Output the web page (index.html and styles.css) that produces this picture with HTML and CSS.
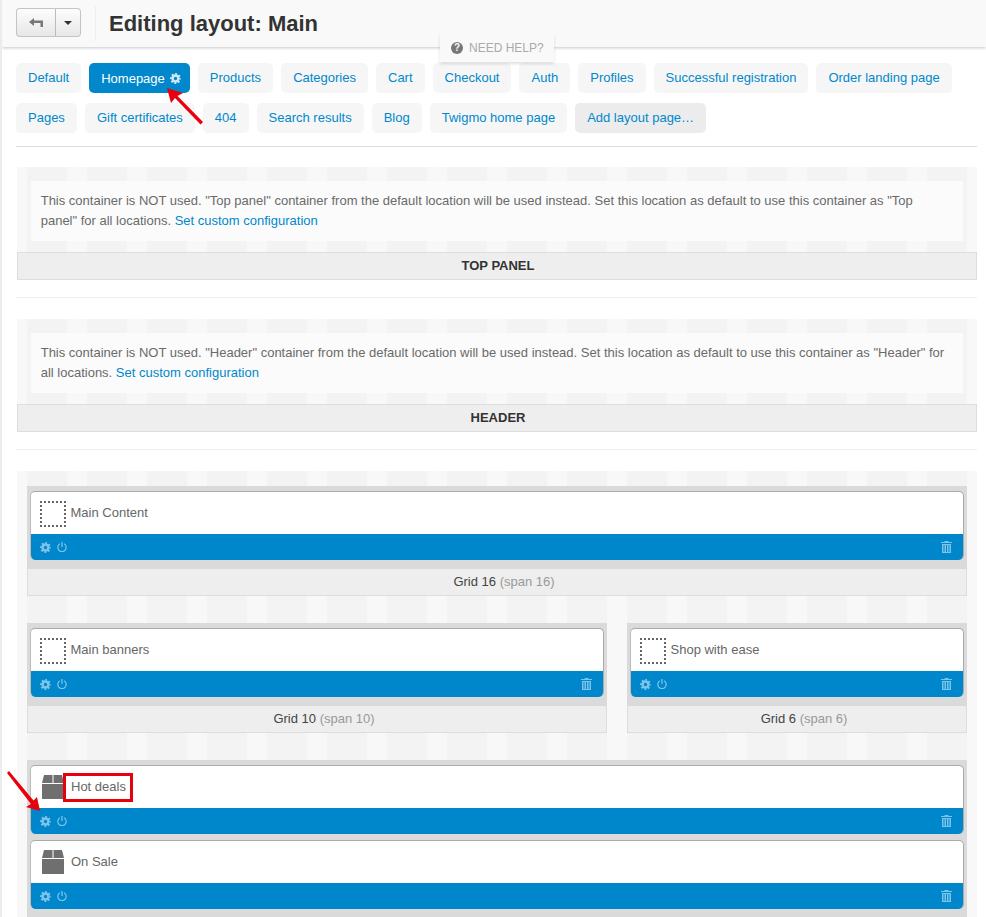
FILE: index.html
```html
<!DOCTYPE html>
<html lang="en">
<head>
<meta charset="utf-8">
<title>Editing layout: Main</title>
<link rel="stylesheet" href="styles.css">
</head>
<body>
<svg class="defs" width="0" height="0" aria-hidden="true">
  <symbol id="gear" viewBox="0 0 12 12">
    <circle cx="6" cy="6" r="3.2" fill="none" stroke="currentColor" stroke-width="2.8"/>
    <circle cx="6" cy="6" r="5" fill="none" stroke="currentColor" stroke-width="2" stroke-dasharray="2 1.93" stroke-dashoffset="1"/>
  </symbol>
  <symbol id="power" viewBox="0 0 12 12">
    <path d="M3.400 2.200a5 5 0 1 0 5.200 0" fill="none" stroke="currentColor" stroke-width="1.500"/>
    <path d="M6 0v6" fill="none" stroke="currentColor" stroke-width="1.500"/>
  </symbol>
  <symbol id="trash" viewBox="0 0 11 12">
    <path d="M0 1h3.500v-1h4v1h3.500v1h-11z" fill="currentColor"/>
    <path d="M1 3h9v9h-9zM2.500 4v7h1v-7zM5 4v7h1v-7zM7.500 4v7h1v-7z" fill="currentColor" fill-rule="evenodd"/>
  </symbol>
  <symbol id="box" viewBox="0 0 22 24">
    <path d="M2 0h8.500v8h-10.500zM11.500 0h8.500l2 8h-10.500zM0 9h22v15h-22z" fill="currentColor"/>
  </symbol>
</svg>

<header class="topbar">
  <div class="btn-group">
    <button class="btn btn-back" type="button" aria-label="Back">
      <svg class="back-icon" viewBox="0 0 14 9" width="14" height="9"><path d="M0 4l5-4v2.500h9v6.500h-2.500v-4h-6.500v3z" fill="#777"/></svg>
    </button>
    <button class="btn btn-caret" type="button" aria-label="More"><span class="caret"></span></button>
  </div>
  <h1 class="title">Editing layout: Main</h1>
</header>
<div class="help">
  <span class="help-icon">?</span>
  <span class="help-text">NEED HELP?</span>
</div>

<main class="page">
  <nav class="tabs">
    <a class="tab">Default</a>
    <a class="tab tab-active">Homepage <svg class="tab-gear"><use href="#gear"/></svg></a>
    <a class="tab">Products</a>
    <a class="tab">Categories</a>
    <a class="tab">Cart</a>
    <a class="tab">Checkout</a>
    <a class="tab">Auth</a>
    <a class="tab">Profiles</a>
    <a class="tab">Successful registration</a>
    <a class="tab">Order landing page</a>
    <a class="tab">Pages</a>
    <a class="tab">Gift certificates</a>
    <a class="tab">404</a>
    <a class="tab">Search results</a>
    <a class="tab">Blog</a>
    <a class="tab">Twigmo home page</a>
    <a class="tab tab-add">Add layout page…</a>
  </nav>

  <section class="section">
    <div class="stage stage-message">
      <p class="notice">This container is NOT used. "Top panel" container from the default location will be used instead. Set this location as default to use this container as "Top panel" for all locations. <a class="link">Set custom configuration</a></p>
      <div class="stage-label">TOP PANEL</div>
    </div>
  </section>

  <section class="section">
    <div class="stage stage-message">
      <p class="notice">This container is NOT used. "Header" container from the default location will be used instead. Set this location as default to use this container as "Header" for all locations. <a class="link">Set custom configuration</a></p>
      <div class="stage-label">HEADER</div>
    </div>
  </section>

  <section class="section section-last">
    <div class="stage stage-grid">
      <div class="grid-row">
        <div class="grid grid-16">
          <div class="grid-body">
            <article class="block">
              <div class="block-head"><span class="ph-icon"></span><span class="block-name">Main Content</span></div>
              <div class="block-bar">
                <svg class="ic-gear"><use href="#gear"/></svg><svg class="ic-power"><use href="#power"/></svg>
                <svg class="ic-trash"><use href="#trash"/></svg>
              </div>
            </article>
          </div>
          <div class="grid-foot">Grid 16 <span class="span-note">(span 16)</span></div>
        </div>
      </div>

      <div class="grid-row">
        <div class="grid grid-10">
          <div class="grid-body">
            <article class="block">
              <div class="block-head"><span class="ph-icon"></span><span class="block-name">Main banners</span></div>
              <div class="block-bar">
                <svg class="ic-gear"><use href="#gear"/></svg><svg class="ic-power"><use href="#power"/></svg>
                <svg class="ic-trash"><use href="#trash"/></svg>
              </div>
            </article>
          </div>
          <div class="grid-foot">Grid 10 <span class="span-note">(span 10)</span></div>
        </div>
        <div class="grid grid-6">
          <div class="grid-body">
            <article class="block">
              <div class="block-head"><span class="ph-icon"></span><span class="block-name">Shop with ease</span></div>
              <div class="block-bar">
                <svg class="ic-gear"><use href="#gear"/></svg><svg class="ic-power"><use href="#power"/></svg>
                <svg class="ic-trash"><use href="#trash"/></svg>
              </div>
            </article>
          </div>
          <div class="grid-foot">Grid 6 <span class="span-note">(span 6)</span></div>
        </div>
      </div>

      <div class="grid-row">
        <div class="grid grid-16">
          <div class="grid-body grid-body-stack">
            <article class="block">
              <div class="block-head"><svg class="box-icon"><use href="#box"/></svg><span class="block-name">Hot deals</span></div>
              <div class="block-bar">
                <svg class="ic-gear"><use href="#gear"/></svg><svg class="ic-power"><use href="#power"/></svg>
                <svg class="ic-trash"><use href="#trash"/></svg>
              </div>
            </article>
            <article class="block">
              <div class="block-head"><svg class="box-icon"><use href="#box"/></svg><span class="block-name">On Sale</span></div>
              <div class="block-bar">
                <svg class="ic-gear"><use href="#gear"/></svg><svg class="ic-power"><use href="#power"/></svg>
                <svg class="ic-trash"><use href="#trash"/></svg>
              </div>
            </article>
          </div>
        </div>
      </div>
    </div>
  </section>
</main>

<div class="mark-box"></div>
<svg class="arrows" width="986" height="917" viewBox="0 0 986 917" aria-hidden="true">
  <g fill="#e8000d" stroke="none">
    <path d="M167 88L183 93 177.500 96 203 122 200.500 124.500 175 98 171 103z"/>
    <path d="M40 811L37 797 33.500 800.500 9 771 7 773 31 804 26 807z"/>
  </g>
</svg>
</body>
</html>
```
FILE: styles.css
```css
* { box-sizing: border-box; }
html, body { margin: 0; height: 917px; overflow: hidden; }
body {
  position: relative;
  background: #fff;
  border-left: 2px solid #ececec;
  font-family: "Liberation Sans", Arial, sans-serif;
  font-size: 13px;
  line-height: 20px;
  color: #666;
}
.defs { position: absolute; }

.topbar {
  height: 47px;
  background: #f9f9f9;
  box-shadow: 0 1px 3px rgba(0,0,0,.22);
  display: flex;
  align-items: center;
  padding: 0 0 0 14px;
  position: relative;
}
.btn-group { display: flex; height: 29px; margin-top: -2px; padding-right: 14px; }
.btn {
  height: 29px;
  padding: 0;
  border: 1px solid #c4c4c4;
  background: linear-gradient(#fdfdfd, #e7e7e7);
  display: flex;
  align-items: center;
  justify-content: center;
}
.btn-back { width: 40px; border-radius: 4px 0 0 4px; border-right: 1px solid #bbb; }
.btn-caret { width: 25px; border-left: 0; border-radius: 0 4px 4px 0; }
.caret { border: 4px solid transparent; border-top-color: #333; border-bottom: 0; }
.title {
  margin: 0;
  padding-left: 13px;
  border-left: 1px solid #eee;
  height: 35px;
  line-height: 35px;
  font-size: 22px;
  font-weight: 700;
  color: #333;
}

.help {
  position: absolute;
  left: 438px;
  top: 33px;
  width: 114px;
  height: 29px;
  background: #f9f9f9;
  box-shadow: 0 2px 3px rgba(0,0,0,.13);
  display: flex;
  align-items: center;
  gap: 6px;
  padding: 0 0 0 11px;
  font-size: 12px;
  color: #aaa;
}
.help-icon {
  width: 12px;
  height: 12px;
  border-radius: 50%;
  background: #777;
  color: #f9f9f9;
  font-size: 10px;
  font-weight: 700;
  line-height: 12px;
  text-align: center;
}

.page { padding: 16px 9px 0 14px; }
.tabs { display: flex; flex-wrap: wrap; gap: 10px 8px; padding-bottom: 13px; border-bottom: 1px solid #ddd; }
.tab {
  height: 30px;
  padding: 0 12px;
  border-radius: 5px;
  background: #f6f6f6;
  color: #0088cc;
  line-height: 29px;
  white-space: nowrap;
}
.tab-active { background: #0087cc; color: #fff; display: flex; align-items: center; gap: 5px; padding-right: 9px; }
.tab-gear { width: 11px; height: 11px; color: #cfe9f7; }
.tab-add { background: #ececec; color: #0088cc; }

.section { padding: 20px 0 17px; border-bottom: 1px solid #eee; margin-left: 0; }
.section + .section { padding-top: 21px; }
.section-last { border-bottom: 0; }

.stage {
  margin-left: 1px;
  background-color: #f8f8f8;
  background-image: repeating-linear-gradient(90deg, #f8f8f8 0 10px, #f3f3f3 10px 50px, #f8f8f8 50px 60px);
}
.stage-message { padding-top: 14px; }
.notice {
  margin: 0 14px 11px 14px;
  padding: 10px 14px 10px 9.7px;
  height: 60px;
  background: #fbfbfb;
  color: #6a6a6a;
}
.link { color: #0088cc; }
.stage-label {
  height: 28px;
  padding-left: 2px;
  line-height: 26px;
  border: 1px solid #ddd;
  background: #eee;
  text-align: center;
  font-weight: 700;
  color: #333;
}

.stage-grid { padding: 15px 10px 0; height: 460px; }
.grid-row { display: flex; gap: 20px; margin-bottom: 27px; }
.grid-16 { width: 940px; }
.grid-10 { width: 580px; }
.grid-6 { width: 340px; }
.grid-body { background: #dadada; padding: 5px 3px 9px 3px; }
.grid-body-stack { display: flex; flex-direction: column; gap: 6px; }
.grid-foot {
  height: 27px;
  padding-left: 14px;
  line-height: 25px;
  border: 1px solid #ddd;
  border-top: 0;
  background: #eee;
  text-align: center;
  color: #444;
}
.span-note { color: #999; }

.block {
  border-radius: 5px;
  overflow: hidden;
  border-top: 1px solid #aaa;
  border-left: 1px solid #bbb;
  border-right: 1px solid #aaa;
  background: #fff;
}
.block-head {
  height: 42px;
  display: flex;
  align-items: center;
  gap: 4.5px;
  padding-left: 9px;
}
.block-name { color: #666; }
.ph-icon { width: 26px; height: 26px; margin-top: 2px; border: 2px dotted #666; }
.box-icon { width: 22px; height: 24px; margin-left: 2px; margin-right: 2.5px; color: #6f6f6f; }
.block-bar {
  height: 26px;
  background: #0087cb;
  color: #7cc4ea;
  display: flex;
  align-items: center;
  padding: 0 11px 0 9px;
  gap: 6px;
}
.ic-gear { width: 11px; height: 11px; }
.ic-power { width: 10px; height: 10px; }
.ic-trash { width: 11px; height: 12px; margin-left: auto; }

.mark-box {
  position: absolute;
  left: 61px;
  top: 773px;
  width: 70px;
  height: 29px;
  border: 3px solid #e8000d;
}
.arrows { position: absolute; left: -2px; top: 0; pointer-events: none; }
```
